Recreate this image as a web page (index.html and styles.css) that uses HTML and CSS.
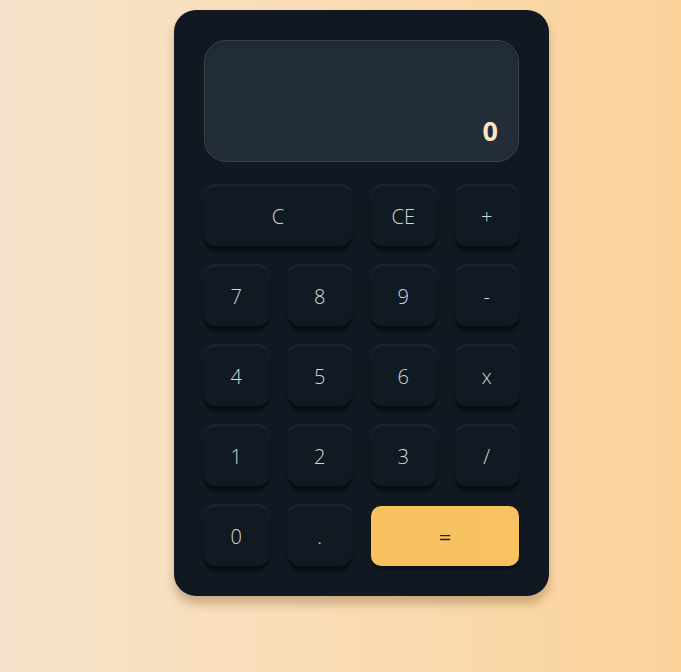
FILE: index.html
```html
<!DOCTYPE html>
<html>
<head>
<meta charset="utf-8">
<link rel="stylesheet" href="styles.css">
</head>
<body>
<div class="page">
  <div class="calc">
    <div class="display"><span class="value">0</span></div>
    <div class="keys">
      <button class="key wide">C</button>
      <button class="key">CE</button>
      <button class="key">+</button>
      <button class="key">7</button>
      <button class="key">8</button>
      <button class="key">9</button>
      <button class="key">-</button>
      <button class="key">4</button>
      <button class="key">5</button>
      <button class="key">6</button>
      <button class="key">x</button>
      <button class="key">1</button>
      <button class="key">2</button>
      <button class="key">3</button>
      <button class="key">/</button>
      <button class="key">0</button>
      <button class="key">.</button>
      <button class="key wide equals">=</button>
    </div>
  </div>
</div>
</body>
</html>
```
FILE: styles.css
```css
html, body {
  margin: 0;
  padding: 0;
  height: 100%;
}
body {
  background: linear-gradient(90deg, #f7e3cc 0%, #f9dcb4 50%, #fbd29a 100%);
  font-family: "Open Sans", "Noto Sans", sans-serif;
}
.page {
  display: flex;
  justify-content: center;
  padding-top: 10px;
  padding-left: 42px;
}
.calc {
  width: 375px;
  box-sizing: border-box;
  padding: 30px;
  background: #111822;
  border-radius: 22px;
  box-shadow: 0 8px 10px rgba(120, 85, 40, 0.35);
}
.display {
  height: 122px;
  box-sizing: border-box;
  border: 1px solid #3c4146;
  border-radius: 22px;
  background: #222d39;
  box-shadow: inset 0 3px 4px rgba(0, 0, 0, 0.15);
  display: flex;
  align-items: flex-end;
  justify-content: flex-end;
  padding: 0 20px 12px 0;
  margin-bottom: 24px;
}
.value {
  color: #fde4c2;
  font-weight: 700;
  font-size: 27px;
  line-height: 36px;
}
.keys {
  display: grid;
  grid-template-columns: repeat(4, 1fr);
  grid-auto-rows: 60px;
  column-gap: 19px;
  row-gap: 20px;
}
.key {
  border: none;
  border-radius: 12px;
  background: #111923;
  color: #d3d7db;
  font-family: "Open Sans", "Noto Sans", sans-serif;
  font-weight: 300;
  font-size: 20px;
  padding: 0;
  box-shadow: 0 -2px 2px rgba(255, 255, 255, 0.07), 0 5px 3px rgba(0, 0, 0, 0.45);
}
.wide {
  grid-column: span 2;
}
.equals {
  background: linear-gradient(90deg, #f7c15f, #f8c260);
  color: #1c2330;
  font-weight: 400;
  font-size: 22px;
  border-radius: 10px;
  box-shadow: 0 3px 3px rgba(0, 0, 0, 0.4);
}
```
